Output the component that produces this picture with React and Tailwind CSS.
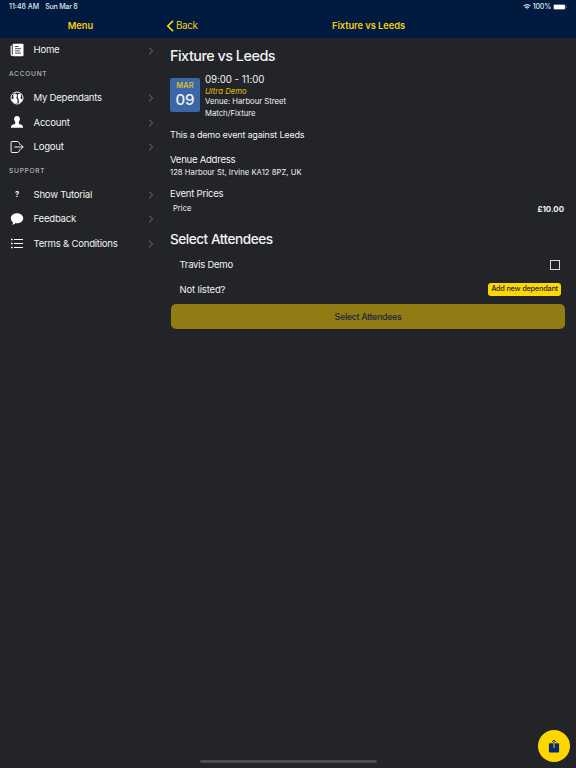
const HomeIcon = () => (
    <svg viewBox="0 0 14 14" className="w-3.5 h-3.5" fill="#fff">
        <path d="M3.3.7h9.4q.8 0 .8.8v10.7q0 1-1 1h-9Q.6 13.2.6 11V3.2q0-.7.7-.7h.5v8.4q0 .9.5.9.4 0 .4-.7V1.4q0-.7.6-.7z" />
        <path d="M5 3.5h3.6M5 5.7h6M5 7.9h5M5 10.1h6" stroke="#222428" strokeWidth=".8" />
    </svg>
);

const DependantsIcon = () => (
    <svg viewBox="0 0 14 14" className="w-3.5 h-3.5">
        <circle cx="7" cy="7" r="6" fill="none" stroke="#fff" strokeWidth="1" />
        <path d="M5.1 2.4c1.2 0 1.9.9 1.800 2.300 0 1-.4 1.600-.5 2.100 0 .9 1 1.200 1.100 2.200v3H5.200C3.200 11.600 2 10.200 1.600 8.600c.7-.7 2-.7 2.100-1.600 0-.5-.5-1-.5-2.100 0-1.500.7-2.500 1.900-2.500z" fill="#fff" />
        <path d="M9.300 2.700c1.300 0 1.800.9 1.700 2.200 0 1-.5 1.600-.5 2.100.1.900 1.300.9 2 1.500-.6 1.800-2 3.100-3.700 3.400V9.300c0-1-.8-1.600-.7-2.300 0-.5-.4-1-.4-2 0-1.400.5-2.300 1.600-2.300z" fill="#fff" />
    </svg>
);

const PersonIcon = () => (
    <svg viewBox="0 0 14 14" className="w-3.5 h-3.5" fill="#fff">
        <path d="M7 1c2 0 3 1.300 2.900 3.200C9.800 5.800 8.800 6.700 8.700 7.700c0 1.300.7 1.500 2 1.800 1.500.4 2.300 1 2.400 3.200H.9C1 10.500 1.800 9.900 3.300 9.500c1.300-.3 2-.5 2-1.800 0-1-1.100-1.900-1.200-3.500C4 2.300 5 1 7 1z" />
    </svg>
);

const LogoutIcon = () => (
    <svg viewBox="0 0 14 14" className="w-3.5 h-3.5" fill="none" stroke="#fff" strokeWidth=".95">
        <path d="M9.500 4.500V3.300L7.900 1.500H1.800q-.7 0-.7.7v9.600q0 .7.7.7h6.100l1.600-1.800V9.500M4.300 7h8.800M10.500 4.300 13.200 7l-2.700 2.700" />
    </svg>
);

const HelpIcon = () => <span className="text-[7.5px] font-bold">?</span>;

const ChatIcon = () => (
    <svg viewBox="0 0 14 14" className="w-3.5 h-3.5" fill="#fff">
        <path d="M7 1.300c3.500 0 6.200 2.200 6.200 5s-2.700 5-6.200 5c-.5 0-1-.1-1.500-.2-.9.900-1.900 1.600-3.500 1.700.7-.7 1.100-1.500 1-2.400C1.600 9.500.8 8 .8 6.300c0-2.800 2.700-5 6.200-5z" />
    </svg>
);

const ListIcon = () => (
    <svg viewBox="0 0 14 14" className="w-3.5 h-3.5" stroke="#fff" strokeWidth="1.100">
        <path d="M4 2.500h9M4 6.500h9M4 10.500h9" />
        <path d="M1 2.500h1.700M1 6.500h1.700M1 10.500h1.700" strokeWidth="1.700" />
    </svg>
);

const sections = [
    { items: [{ label: 'Home', icon: HomeIcon }] },
    {
        title: 'ACCOUNT',
        items: [
            { label: 'My Dependants', icon: DependantsIcon },
            { label: 'Account', icon: PersonIcon },
            { label: 'Logout', icon: LogoutIcon },
        ],
    },
    {
        title: 'SUPPORT',
        items: [
            { label: 'Show Tutorial', icon: HelpIcon },
            { label: 'Feedback', icon: ChatIcon },
            { label: 'Terms & Conditions', icon: ListIcon },
        ],
    },
];

function MenuItem({ label, icon: Icon }) {
    return (
        <a className="flex items-center h-[24.7px] pl-2.5">
            <span className="w-3.5 h-3.5 flex items-center justify-center">
                <Icon />
            </span>
            <span className="flex-1 self-stretch flex items-center justify-between ml-[9.5px] pt-[1.6px] pr-[6px] border-b border-[#26272b] text-[9.6px] tracking-[-0.24px]">
                {label}
                <svg viewBox="0 0 6 8" className="w-1.5 h-2" fill="none" stroke="#707275" strokeWidth="1">
                    <path d="M.9.6 4.700 4 .9 7.400" />
                </svg>
            </span>
        </a>
    );
}

function Sidebar() {
    return (
        <aside className="w-[161px] shrink-0 border-r border-[#202226]">
            {sections.map((section, i) => (
                <div key={i}>
                    {section.title && (
                        <div className="h-[22.7px] flex items-center pt-[2px] pl-[9px] text-[6.6px] tracking-[0.75px] text-[#d0d0d1]">
                            {section.title}
                        </div>
                    )}
                    {section.items.map((item) => (
                        <MenuItem key={item.label} {...item} />
                    ))}
                </div>
            ))}
        </aside>
    );
}

function Header() {
    return (
        <header className="h-[38px] bg-[#001a40]">
            <div className="h-3.5 flex items-center justify-between pl-[9px] pr-[9px] text-[7px] font-medium text-[#e5e8ec]">
                <div className="flex gap-[6px]">
                    <span>11:48 AM</span>
                    <span className="tracking-[-0.2px]">Sun Mar 8</span>
                </div>
                <div className="flex items-center gap-[2px]">
                    <svg viewBox="0 0 8 6" className="w-2 h-1.5" fill="none" stroke="#e5e8ec" strokeWidth="1.100">
                        <path d="M.6 2.200Q4-.9 7.400 2.200M2 3.700q2-1.700 4 0" />
                        <path d="M3 4.500h2L4 5.600z" fill="#e5e8ec" stroke="none" />
                    </svg>
                    <span className="tracking-[-0.15px]">100%</span>
                    <svg viewBox="0 0 14 6" className="w-3.5 h-1.5">
                        <rect x=".2" y=".2" width="12.300" height="5.600" rx="1.500" fill="none" stroke="#8290a5" strokeWidth=".4" />
                        <rect x=".8" y=".7" width="11.100" height="4.600" rx="1" fill="#fff" />
                        <path d="M13 2v2q.8-.3.8-1T13 2z" fill="#8290a5" />
                    </svg>
                </div>
            </div>
            <div className="h-6 flex items-center text-[9.3px] text-[#f5cf0a]">
                <div className="w-[161px] text-center font-semibold">Menu</div>
                <div className="flex-1 grid grid-cols-3 items-center">
                    <div className="flex items-center gap-[2px] pl-[5px] text-[9.8px] tracking-[-0.3px]">
                        <svg viewBox="0 0 8 12" className="w-2 h-3" fill="none" stroke="#ffd600" strokeWidth="1.700">
                            <path d="M7 .8 1.800 6 7 11.200" />
                        </svg>
                        Back
                    </div>
                    <div className="text-center font-semibold whitespace-nowrap tracking-[-0.05px]">Fixture vs Leeds</div>
                </div>
            </div>
        </header>
    );
}

function EventDetails() {
    return (
        <main className="flex-1 pl-[9px] pr-[10px]">
            <h1 className="h-9 flex items-center text-[14.4px] font-medium tracking-[-0.5px]">Fixture vs Leeds</h1>

            <section className="flex h-[53px] pt-[4.3px]">
                <div className="w-[30px] h-[34px] mr-[5px] rounded-[2px] bg-[#3b66a8] flex flex-col items-center text-center">
                    <span className="mt-[3px] text-[7.5px] leading-[10px] font-semibold text-[#d9c32c]">MAR</span>
                    <span className="text-[15px] leading-[18px] font-medium">09</span>
                </div>
                <div className="-mt-[5px]">
                    <div className="text-[9.7px] leading-[13px] tracking-[-0.05px]">09:00 - 11:00</div>
                    <div className="text-[7.8px] leading-[11px] italic text-[#e0c016]">Ultra Demo</div>
                    <div className="text-[7.7px] leading-[10px]">Venue: Harbour Street</div>
                    <div className="text-[7.7px] leading-[13px]">Match/Fixture</div>
                </div>
            </section>

            <p className="h-[26px] flex items-start pt-px text-[9px] leading-[13px] tracking-[-0.18px]">This a demo event against Leeds</p>

            <section className="h-[29px] border-b border-[#26272b]">
                <h2 className="text-[9.6px] leading-[14px] tracking-[-0.28px]">Venue Address</h2>
                <p className="text-[7.7px] leading-[11px] tracking-[0.02px]">128 Harbour St, Irvine KA12 8PZ, UK</p>
            </section>

            <section className="h-[39px] pt-[5px] border-b border-[#26272b]">
                <h2 className="text-[9.6px] leading-[14px] tracking-[-0.25px]">Event Prices</h2>
                <div className="flex justify-between pl-[3px] pr-[2px] pt-[2px] text-[7.6px] leading-[12px]">
                    <span>Price</span>
                    <span className="font-bold text-[7.9px]">£10.00</span>
                </div>
            </section>

            <h1 className="h-[31px] flex items-center pt-[5px] text-[13.6px] font-medium tracking-[-0.48px]">Select Attendees</h1>

            <div className="h-[25px] flex items-center justify-between pt-[2px] pl-[9.5px] pr-[6.5px] border-b border-[#26272b] text-[9.5px] tracking-[-0.25px]">
                Travis Demo
                <span className="w-[10px] h-[10px] border border-[#d8d8d8]" />
            </div>
            <div className="h-[25px] flex items-center justify-between pl-[9.5px] pr-[5px] text-[9.5px] tracking-[-0.15px]">
                <span className="pt-px">Not listed?</span>
                <button className="w-[73px] h-[13px] rounded-[3px] bg-[#ffd600] text-[#172b43] text-[7.3px] font-medium tracking-[-0.2px] whitespace-nowrap flex items-center justify-center">
                    Add new dependant
                </button>
            </div>
            <button className="w-[394px] h-[25px] mt-[2px] ml-px rounded-[5px] bg-[#917c14] text-[#172640] text-[8.9px] font-medium tracking-[-0.32px] flex items-center justify-center">
                Select Attendees
            </button>
        </main>
    );
}

export default function App() {
    return (
        <div className="relative w-[576px] h-[768px] overflow-hidden bg-[#222428] text-[#f2f2f2] font-['Inter',sans-serif] flex flex-col">
            <Header />
            <div className="flex-1 flex">
                <Sidebar />
                <EventDetails />
            </div>

            {/* Share button */}
            <button className="absolute left-[538px] top-[730px] w-8 h-8 rounded-full bg-[#ffd600] flex items-center justify-center">
                <svg viewBox="0 0 12 14" className="w-3 h-3.5" fill="#0b2a6b">
                    <path d="M1.900 4.300h3.200v4.300h1.800V4.300h3.200q1 0 1 1v7.200q0 1-1 1H1.900q-1 0-1-1V5.300q0-1 1-1z" />
                    <path d="M6 8V1.300M3.900 3.200 6 1.100l2.100 2.100" fill="none" stroke="#0b2a6b" strokeWidth=".9" />
                </svg>
            </button>
            {/* Home indicator */}
            <div className="absolute left-[200px] top-[760px] w-[177px] h-[3px] rounded-full bg-[#4c4d4e]" />
        </div>
    );
}
